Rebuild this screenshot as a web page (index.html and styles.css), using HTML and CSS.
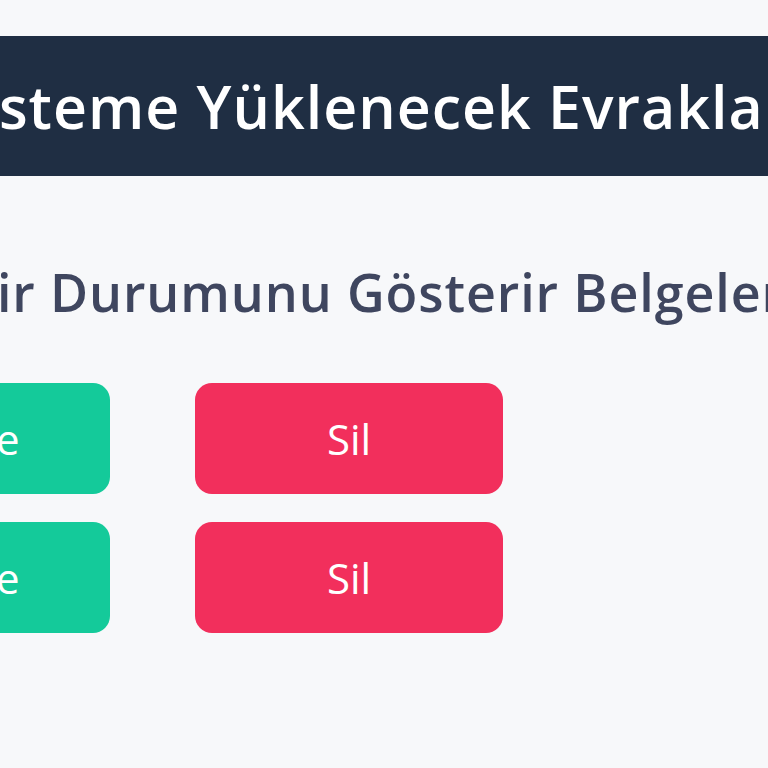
FILE: index.html
```html
<!DOCTYPE html>
<html lang="tr">
<head>
<meta charset="utf-8">
<title>Sisteme Yüklenecek Evraklar</title>
<link rel="stylesheet" href="styles.css">
</head>
<body>
<div class="page">
  <header class="banner">
    <h1 class="banner-title">Sisteme Yüklenecek Evrakları</h1>
  </header>
  <section class="docs">
    <h2 class="docs-title">Gelir Durumunu Gösterir Belgeleri</h2>
    <div class="doc-rows">
      <div class="doc-row">
        <button class="btn btn-view">Görüntüle</button>
        <button class="btn btn-delete">Sil</button>
      </div>
      <div class="doc-row">
        <button class="btn btn-view">Görüntüle</button>
        <button class="btn btn-delete">Sil</button>
      </div>
    </div>
  </section>
</div>
</body>
</html>
```
FILE: styles.css
```css
html, body {
  margin: 0;
  padding: 0;
  background: #f7f8fa;
  overflow: hidden;
}
.page {
  width: 768px;
  height: 768px;
  overflow: hidden;
  font-family: "Open Sans", "Noto Sans", sans-serif;
  padding-top: 36px;
  box-sizing: border-box;
}
.banner {
  height: 140px;
  background: #1f2e43;
  display: flex;
  align-items: center;
  white-space: nowrap;
}
.banner-title {
  margin: 0 0 0 -52px;
  color: #ffffff;
  font-size: 59px;
  font-weight: 600;
  letter-spacing: 1px;
  line-height: 1;
}
.docs {
  padding-top: 90px;
}
.docs-title {
  margin: 0 0 0 -88px;
  white-space: nowrap;
  color: #3f465f;
  font-size: 52px;
  font-weight: 600;
  letter-spacing: 0.9px;
  line-height: 1;
}
.doc-rows {
  margin-top: 65px;
  display: flex;
  flex-direction: column;
  gap: 28px;
}
.doc-row {
  display: flex;
  gap: 85px;
  margin-left: -270px;
}
.btn {
  height: 111px;
  border: none;
  border-radius: 17px;
  color: #ffffff;
  font-family: inherit;
  font-size: 42px;
  font-weight: 500;
  display: flex;
  align-items: center;
  justify-content: center;
  padding: 0;
}
.btn-view {
  width: 380px;
  background: #14ca9a;
}
.btn-delete {
  width: 308px;
  background: #f22f5c;
}
```
